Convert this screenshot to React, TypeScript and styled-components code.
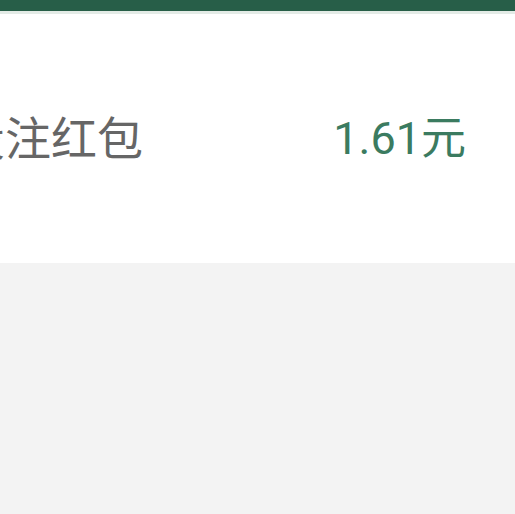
import React from "react";
import styled, { createGlobalStyle } from "styled-components";

const Global = createGlobalStyle`
  html, body, #root { margin: 0; padding: 0; height: 100%; }
  body { background: #f3f3f3; font-family: "Noto Sans CJK SC", "Noto Sans", sans-serif; overflow: hidden; }
`;

const Page = styled.div`
  display: flex;
  flex-direction: column;
  min-height: 100%;
  background: #f3f3f3;
`;

const TopBar = styled.div`
  height: 11px;
  background: #275e48;
  border-bottom: 3px solid #e3ebe6;
`;

const Row = styled.div`
  height: 249px;
  box-sizing: border-box;
  padding: 0 49px 8px 0;
  background: #ffffff;
  display: flex;
  align-items: center;
  justify-content: space-between;
  overflow: hidden;
`;

const Label = styled.span`
  margin-left: -41px;
  font-size: 46px;
  color: #666666;
  white-space: nowrap;
`;

const Value = styled.span`
  font-family: Roboto, "Noto Sans CJK SC", sans-serif;
  font-size: 45px;
  color: #3b7b60;
  white-space: nowrap;
`;

export default function App() {
  return (
    <>
      <Global />
      <Page>
        <TopBar />
        <Row>
          <Label>投注红包</Label>
          <Value>1.61元</Value>
        </Row>
      </Page>
    </>
  );
}
